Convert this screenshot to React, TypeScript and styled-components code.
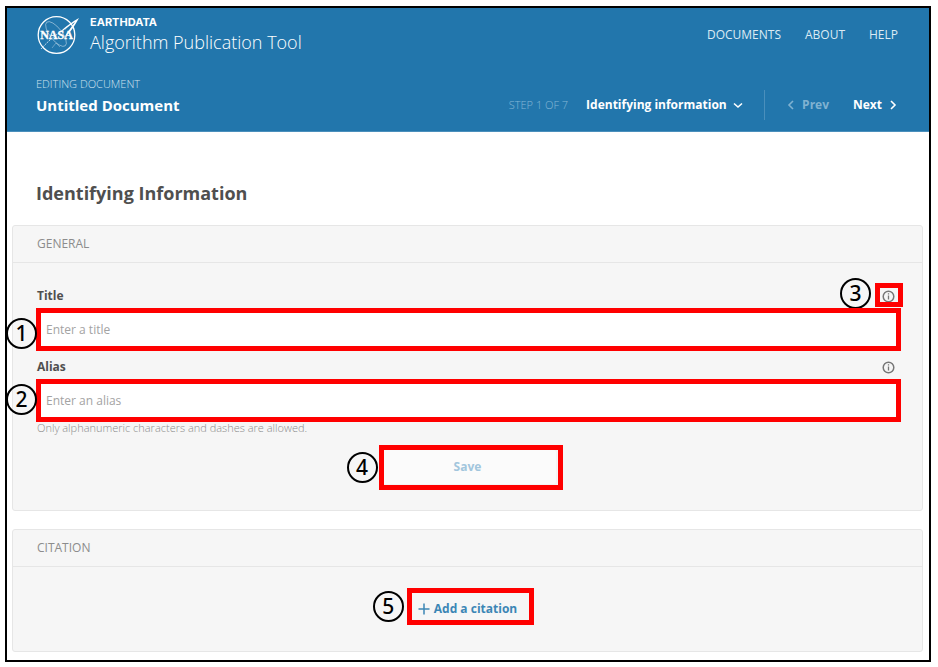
import React from "react";
import styled, { createGlobalStyle } from "styled-components";

const GlobalStyle = createGlobalStyle`
  * { box-sizing: border-box; }
  body {
    margin: 0;
    background: #fff;
    color: #4f4f4f;
    font-family: "Open Sans", "Noto Sans", sans-serif;
    font-size: 12px;
    line-height: 18px;
  }
  button, input, select { font: inherit; color: inherit; }
`;

const Frame = styled.div`
  margin: 6px 7px 5px 5px;
  border: 2px solid #000;
  background: #fff;
`;

const Header = styled.header`
  display: flex;
  flex-direction: column;
  gap: 19px;
  padding: 6px 31px 11px 29px;
  background: #2276ac;
  border-bottom: 1px solid #4a8fbc;
  color: #fff;
`;

const Bar = styled.div`
  display: flex;
  align-items: center;
  justify-content: space-between;
`;

const Brand = styled.a`
  display: flex;
  align-items: center;
  gap: 10px;
  color: inherit;
  text-decoration: none;
`;

const BrandText = styled.span`
  display: flex;
  flex-direction: column;
`;

const Organisation = styled.span`
  font-family: Inter, sans-serif;
  font-size: 11px;
  font-weight: 700;
  line-height: 14px;
`;

const Product = styled.span`
  font-size: 18px;
  font-weight: 300;
  line-height: 26px;
`;

const Menu = styled.nav`
  display: flex;
  gap: 24px;
`;

const MenuLink = styled.a`
  color: #dcebf4;
  text-decoration: none;
`;

const DocumentHeading = styled.div`
  padding-bottom: 3px;
`;

const Eyebrow = styled.p`
  margin: 0;
  color: #cfe2ee;
  font-size: 11px;
  font-weight: 300;
  line-height: 18px;
`;

const DocumentTitle = styled.p`
  margin: 0;
  font-size: 15px;
  font-weight: 700;
  line-height: 24px;
`;

const Steps = styled.div`
  display: flex;
  align-items: center;
  align-self: flex-end;
  gap: 21px;
`;

const Pager = styled.div`
  display: flex;
  gap: 24px;
`;

const StepPicker = styled.label`
  display: flex;
  align-items: center;
  gap: 18px;
`;

const StepCount = styled.span`
  color: #86b7d6;
  font-size: 11px;
  font-weight: 300;
`;

const SelectBox = styled.span`
  display: flex;
  align-items: center;
  gap: 6px;
`;

const StepSelect = styled.select`
  appearance: none;
  padding: 0;
  border: 0;
  background: none;
  font-weight: 700;
`;

const Divider = styled.span`
  width: 1px;
  height: 30px;
  background: #4a8fbc;
`;

const StepButton = styled.button`
  display: flex;
  align-items: center;
  gap: 6px;
  padding: 0;
  border: 0;
  background: none;
  font-weight: 700;
  color: #fff;

  &:disabled { color: #80b2d1; }
`;

const Main = styled.main`
  display: flex;
  flex-direction: column;
  gap: 18px;
  padding: 48px 6px 8px 5px;
`;

const PageTitle = styled.h1`
  margin: 0 24px;
  font-size: 18px;
  font-weight: 700;
  line-height: 27px;
`;

const Panel = styled.section`
  background: #f6f6f6;
  border: 1px solid #e6e6e6;
  border-radius: 3px;
`;

const PanelTitle = styled.h2`
  margin: 0;
  padding: 9px 24px;
  border-bottom: 1px solid #e6e6e6;
  color: #8c8c8c;
  font-size: 12px;
  font-weight: 400;
`;

const Form = styled.form`
  display: flex;
  flex-direction: column;
  padding: 24px 22px 25px 24px;
`;

const Field = styled.div`
  display: flex;
  flex-direction: column;
  gap: 4px;
  margin-bottom: 8px;
`;

const FieldHead = styled.div`
  display: flex;
  align-items: center;
  justify-content: space-between;
  padding-right: 5px;
`;

const FieldLabel = styled.label`
  font-weight: 700;
`;

const Marked = styled.div`
  position: relative;
  display: flex;
`;

const Highlight = styled.span<{ $inset: string }>`
  position: absolute;
  inset: ${(p) => p.$inset};
  border: 5px solid #f00;
  pointer-events: none;
`;

const Marker = styled.span<{ $left: number; $top: number }>`
  position: absolute;
  left: ${(p) => p.$left}px;
  top: ${(p) => p.$top}px;
  width: 31px;
  height: 31px;
  border: 2px solid #000;
  border-radius: 50%;
  color: #000;
  font-family: "Noto Sans", sans-serif;
  font-size: 21px;
  font-weight: 500;
  line-height: 27px;
  text-align: center;
`;

const InfoButton = styled.button`
  display: flex;
  padding: 0;
  border: 0;
  background: none;
  color: #777;
`;

const TextInput = styled.input`
  flex: 1;
  min-width: 0;
  height: 41px;
  padding: 0 8px;
  border: 1px solid #e0e0e0;
  border-radius: 0;
  background: #fff;

  &::placeholder { color: #a3a3a3; opacity: 1; }
`;

const Hint = styled.p`
  margin: -9px 0 0;
  color: #8c8c8c;
  font-size: 11px;
  font-weight: 300;
  line-height: 16px;
`;

const Actions = styled.div<{ $padding: string }>`
  display: flex;
  justify-content: center;
  padding: ${(p) => p.$padding};
`;

const SaveButton = styled.button`
  width: 176px;
  height: 36px;
  padding: 0 2px 0 0;
  border: 1px solid #f3f3f3;
  border-radius: 3px;
  background: #fbfbfb;
  font-weight: 700;

  &:disabled { color: #a2c6dd; }
`;

const AddButton = styled.button`
  display: flex;
  align-items: center;
  gap: 4px;
  padding: 0;
  border: 0;
  background: none;
  color: #3c86b5;
  font-weight: 700;
`;

type Direction = "down" | "left" | "right";
const chevrons: Record<Direction, string> = {
  down: "M1 3.500 5 7l4-3.500",
  left: "M7 1 3 5l4 4",
  right: "M3 1l4 4-4 4",
};

const Chevron = ({ direction }: { direction: Direction }) => (
  <svg width="10" height="10" viewBox="0 0 10 10" fill="none" stroke="currentColor" strokeWidth="1.6" aria-hidden="true">
    <path d={chevrons[direction]} />
  </svg>
);

const InfoIcon = () => (
  <svg width="13" height="13" viewBox="0 0 13 13" fill="none" stroke="currentColor" aria-hidden="true">
    <circle cx="6.500" cy="6.500" r="5.300" strokeWidth="1.500" />
    <path d="M6.500 5.500v4M6.500 3.200v1.300" strokeWidth="1.300" />
  </svg>
);

const PlusIcon = () => (
  <svg width="12" height="12" viewBox="0 0 12 12" fill="none" stroke="currentColor" strokeWidth="1.500" aria-hidden="true">
    <path d="M6 .5v11M.5 6h11" />
  </svg>
);

const Logo = () => (
  <svg width="44" height="42" viewBox="0 0 44 42" fill="none" stroke="#fff" aria-hidden="true">
    <circle cx="20.500" cy="21" r="18.300" strokeWidth="1.300" />
    <ellipse cx="20" cy="20" rx="6" ry="15" strokeWidth=".8" opacity=".5" transform="rotate(-38 20 20)" />
    <path d="M5 35C13 26 22 19 31 14" strokeWidth="1" strokeDasharray="2 .8" opacity=".7" />
    <path d="M23 19C30 12 36 8 43 4 38 13 34 19 28 24 33 16 36 12 39 8 34 11 30 15 23 19z" fill="#fff" stroke="none" />
    <path d="M16 34l4-5 4 4" strokeWidth=".8" opacity=".4" />
    <text x="20.500" y="25" textAnchor="middle" fill="#fff" stroke="#fff" strokeWidth=".3" fontFamily="Liberation Serif, serif" fontWeight="700" fontSize="12">NASA</text>
  </svg>
);

const App = () => (
  <>
    <GlobalStyle />
    <Frame>
      <Header>
        <Bar>
          <Brand href="#home">
            <Logo />
            <BrandText>
              <Organisation>EARTHDATA</Organisation>
              <Product>Algorithm Publication Tool</Product>
            </BrandText>
          </Brand>
          <Menu>
            <MenuLink href="#documents">DOCUMENTS</MenuLink>
            <MenuLink href="#about">ABOUT</MenuLink>
            <MenuLink href="#help">HELP</MenuLink>
          </Menu>
        </Bar>
        <Bar>
          <DocumentHeading>
            <Eyebrow>EDITING DOCUMENT</Eyebrow>
            <DocumentTitle>Untitled Document</DocumentTitle>
          </DocumentHeading>
          <Steps>
            <StepPicker>
              <StepCount>STEP 1 OF 7</StepCount>
              <SelectBox>
                <StepSelect>
                  <option>Identifying information</option>
                </StepSelect>
                <Chevron direction="down" />
              </SelectBox>
            </StepPicker>
            <Divider />
            <Pager>
              <StepButton type="button" disabled>
                <Chevron direction="left" />
                Prev
              </StepButton>
              <StepButton type="button">
                Next
                <Chevron direction="right" />
              </StepButton>
            </Pager>
          </Steps>
        </Bar>
      </Header>
      <Main>
        <PageTitle>Identifying Information</PageTitle>
        <Panel>
          <PanelTitle>GENERAL</PanelTitle>
          <Form>
            <Field>
              <FieldHead>
                <FieldLabel htmlFor="title">Title</FieldLabel>
                <Marked>
                  <InfoButton type="button" aria-label="About the title">
                    <InfoIcon />
                  </InfoButton>
                  <Highlight $inset="-7px -8px -4px -7px" />
                  <Marker $left={-42} $top={-12}>3</Marker>
                </Marked>
              </FieldHead>
              <Marked>
                <TextInput id="title" type="text" placeholder="Enter a title" />
                <Highlight $inset="-1px" />
                <Marker $left={-31} $top={9}>1</Marker>
              </Marked>
            </Field>
            <Field>
              <FieldHead>
                <FieldLabel htmlFor="alias">Alias</FieldLabel>
                <InfoButton type="button" aria-label="About the alias">
                  <InfoIcon />
                </InfoButton>
              </FieldHead>
              <Marked>
                <TextInput id="alias" type="text" placeholder="Enter an alias" aria-describedby="alias-hint" />
                <Highlight $inset="-1px" />
                <Marker $left={-31} $top={4}>2</Marker>
              </Marked>
            </Field>
            <Hint id="alias-hint">Only alphanumeric characters and dashes are allowed.</Hint>
            <Actions $padding="13px 0 0">
              <Marked>
                <SaveButton type="submit" disabled>Save</SaveButton>
                <Highlight $inset="-4px -6px -5px -2px" />
                <Marker $left={-34} $top={3}>4</Marker>
              </Marked>
            </Actions>
          </Form>
        </Panel>
        <Panel>
          <PanelTitle>CITATION</PanelTitle>
          <Actions $padding="33px 24px 33px">
            <Marked>
              <AddButton type="button">
                <PlusIcon />
                Add a citation
              </AddButton>
              <Highlight $inset="-12px -17px -7px -11px" />
              <Marker $left={-45} $top={-9}>5</Marker>
            </Marked>
          </Actions>
        </Panel>
      </Main>
    </Frame>
  </>
);

export default App;
